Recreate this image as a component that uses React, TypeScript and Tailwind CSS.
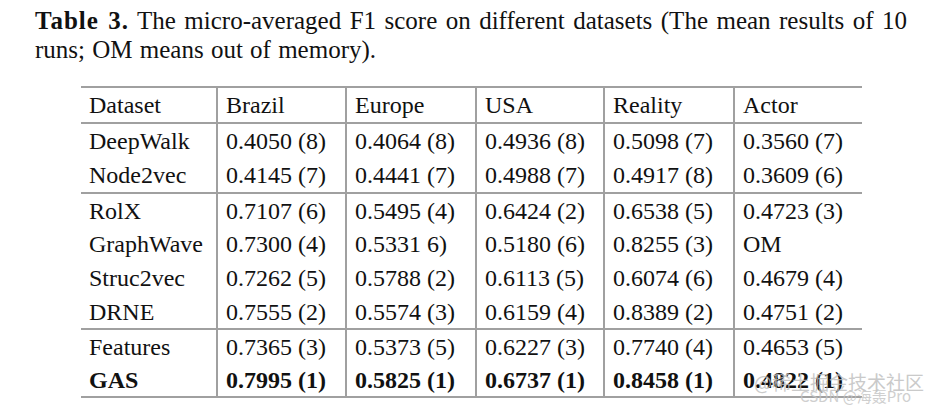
const columns = ["Dataset", "Brazil", "Europe", "USA", "Reality", "Actor"];
const widths = ["w-[136px]", "w-[129px]", "w-[130px]", "w-[128px]", "w-[130px]", "w-[128px]"];

type Row = { cells: string[]; bold?: boolean };

const groups: { height: string; rows: Row[] }[] = [
  {
    height: "h-[35px]",
    rows: [
      { cells: ["DeepWalk", "0.4050 (8)", "0.4064 (8)", "0.4936 (8)", "0.5098 (7)", "0.3560 (7)"] },
      { cells: ["Node2vec", "0.4145 (7)", "0.4441 (7)", "0.4988 (7)", "0.4917 (8)", "0.3609 (6)"] },
    ],
  },
  {
    height: "h-[34px]",
    rows: [
      { cells: ["RolX", "0.7107 (6)", "0.5495 (4)", "0.6424 (2)", "0.6538 (5)", "0.4723 (3)"] },
      { cells: ["GraphWave", "0.7300 (4)", "0.5331 6)", "0.5180 (6)", "0.8255 (3)", "OM"] },
      { cells: ["Struc2vec", "0.7262 (5)", "0.5788 (2)", "0.6113 (5)", "0.6074 (6)", "0.4679 (4)"] },
      { cells: ["DRNE", "0.7555 (2)", "0.5574 (3)", "0.6159 (4)", "0.8389 (2)", "0.4751 (2)"] },
    ],
  },
  {
    height: "h-[34px]",
    rows: [
      { cells: ["Features", "0.7365 (3)", "0.5373 (5)", "0.6227 (3)", "0.7740 (4)", "0.4653 (5)"] },
      { cells: ["GAS", "0.7995 (1)", "0.5825 (1)", "0.6737 (1)", "0.8458 (1)", "0.4822 (1)"], bold: true },
    ],
  },
];

export default function App() {
  return (
    <div className="relative h-[411px] w-[928px] overflow-hidden bg-white font-['Liberation_Serif',serif] text-[#111]">
      <p className="pl-[35px] pt-[6px] text-[25px] leading-[29px] whitespace-nowrap">
        <span className="[word-spacing:2.2px]">
          <span className="font-bold tracking-[1px]">Table 3.</span> The micro-averaged F1 score on different datasets (The mean results of 10
        </span>
        <br />
        <span className="[word-spacing:1px]">runs; OM means out of memory).</span>
      </p>

      <table className="ml-[81px] mt-[22px] table-fixed border-collapse text-[24px] leading-[24px]">
        <thead>
          <tr className="border-y-2 border-[#a0a0a0]">
            {columns.map((name, index) => (
              <td
                className={`${widths[index]} h-[36px] p-0 pl-[8px] align-middle ${index > 0 ? "border-l-2 border-[#a0a0a0]" : ""}`}
                key={name}
              >
                {name}
              </td>
            ))}
          </tr>
        </thead>
        {groups.map((group, groupIndex) => (
          <tbody className="border-b-2 border-[#a0a0a0]" key={groupIndex}>
            {group.rows.map((row) => (
              <tr className={row.bold ? "font-bold" : ""} key={row.cells[0]}>
                {row.cells.map((cell, index) => (
                  <td
                    className={`${group.height} p-0 pl-[8px] align-middle whitespace-nowrap ${index > 0 ? "border-l-2 border-[#a0a0a0]" : ""}`}
                    key={index}
                  >
                    {cell}
                  </td>
                ))}
              </tr>
            ))}
          </tbody>
        ))}
      </table>

      {/* watermark */}
      <div className="pointer-events-none absolute left-[754px] top-[372px] whitespace-nowrap font-['Noto_Sans_CJK_SC',sans-serif] text-[19px] leading-none text-[#bdbdbd] opacity-80">
        @稀土掘金技术社区
      </div>
      <div className="pointer-events-none absolute left-[800px] top-[388px] whitespace-nowrap font-['Noto_Sans_CJK_SC',sans-serif] text-[15px] leading-none text-[#c4c4c4] opacity-80">
        CSDN @海轰Pro
      </div>
    </div>
  );
}
